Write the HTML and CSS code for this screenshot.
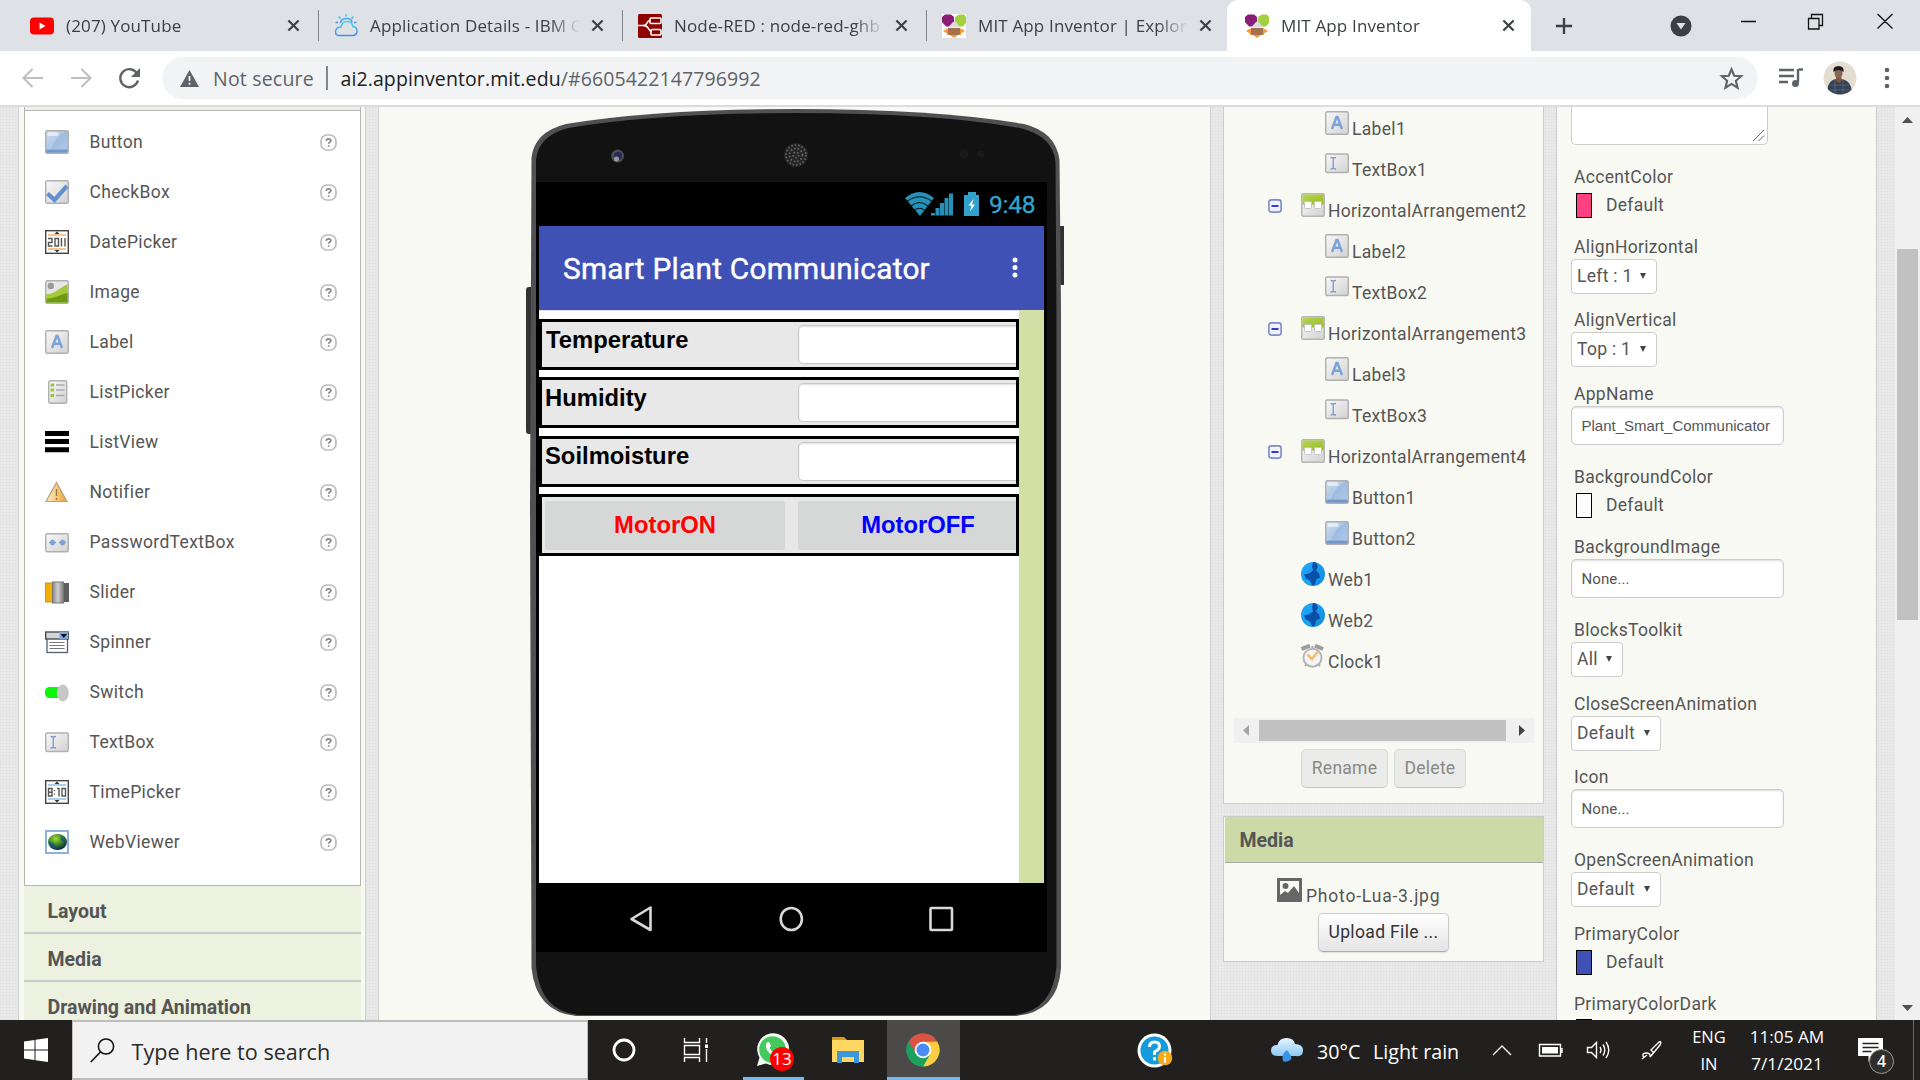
FILE: index.html
```html
<!DOCTYPE html>
<html lang="en">
<head>
<meta charset="utf-8">
<title>MIT App Inventor</title>
<link rel="stylesheet" href="styles.css">
</head>
<body>
<svg class="defs" width="0" height="0" aria-hidden="true">
  <defs>
    <linearGradient id="gBlue" x1="0" y1="0" x2="1" y2="1"><stop offset="0" stop-color="#c3d6ee"/><stop offset=".4" stop-color="#9dbbe0"/><stop offset="1" stop-color="#b0cbe8"/></linearGradient>
    <linearGradient id="gGray" x1="0" y1="0" x2="1" y2="1"><stop offset="0" stop-color="#f8f8f8"/><stop offset="1" stop-color="#d2d2d2"/></linearGradient>
    <linearGradient id="gGreen" x1="0" y1="0" x2="1" y2="1"><stop offset="0" stop-color="#b6d65a"/><stop offset="1" stop-color="#98bb20"/></linearGradient>
    <linearGradient id="gOrange" x1="0" y1="0" x2="1" y2="0"><stop offset="0" stop-color="#fff0cf"/><stop offset="1" stop-color="#f0a030"/></linearGradient>
    <linearGradient id="gMetal" x1="0" y1="0" x2="1" y2="0"><stop offset="0" stop-color="#8a8a8a"/><stop offset=".5" stop-color="#cfcfcf"/><stop offset="1" stop-color="#777"/></linearGradient>
    <radialGradient id="gGlobe" cx=".4" cy=".3" r=".7"><stop offset="0" stop-color="#a5d63c"/><stop offset=".5" stop-color="#3f8f22"/><stop offset="1" stop-color="#08264f"/></radialGradient>
    <linearGradient id="gCloud" x1="0" y1="0" x2="0" y2="1"><stop offset="0" stop-color="#e6f6ff"/><stop offset="1" stop-color="#8cc8f5"/></linearGradient>
    <linearGradient id="gIbm" x1="0" y1="0" x2="0" y2="1"><stop offset="0" stop-color="#4fd3e6"/><stop offset="1" stop-color="#4b8df0"/></linearGradient>
    <linearGradient id="gWeb" x1="0" y1="0" x2="1" y2="1"><stop offset="0" stop-color="#25aaff"/><stop offset="1" stop-color="#0f8ad8"/></linearGradient>
    <symbol id="i-button" viewBox="0 0 24 24"><rect x=".7" y=".7" width="22.6" height="22.6" rx="1.5" fill="url(#gBlue)" stroke="#b0b0b0" stroke-width="1.4"/><path d="M1.5 1.5H20Q10 8 5 20H1.500z" fill="#fff" opacity=".22"/><rect x="2.500" y="2" width="11" height="4" rx="1.500" fill="#fff" opacity=".55"/><rect x="1.400" y="19.600" width="21.200" height="3" fill="#7396cb"/></symbol>
    <symbol id="i-check" viewBox="0 0 24 24"><rect x=".7" y=".7" width="22.6" height="22.6" rx="1.5" fill="url(#gGray)" stroke="#b0b0b0" stroke-width="1.4"/><path d="M2.500 13.500l7 6.500L22 6" fill="none" stroke="#628fd0" stroke-width="4.200"/></symbol>
    <symbol id="i-date" viewBox="0 0 24 24"><rect x=".7" y=".7" width="22.6" height="22.6" fill="#fff" stroke="#444" stroke-width="1.4"/><path d="M3 5h18M3 19h18" stroke="#f3b469" stroke-width="1.300"/><path d="M9.500 4l2.500-2.500L14.500 4zM9.500 20l2.500 2.500 2.500-2.500z" fill="#333"/><path d="M3 8.500h4v4H3.500v3.500H7.500M10 8.500h3.500V16H10zM16.500 8v8.500M20 8v8.500" fill="none" stroke="#555" stroke-width="1.400"/></symbol>
    <symbol id="i-time" viewBox="0 0 24 24"><rect x=".7" y=".7" width="22.6" height="22.6" fill="#fff" stroke="#444" stroke-width="1.4"/><path d="M3 5h18M3 19h18" stroke="#8fc0e4" stroke-width="1.300"/><path d="M9.500 4l2.500-2.500L14.500 4zM9.500 20l2.500 2.500 2.500-2.500z" fill="#333"/><path d="M3.500 8.500h3.500V16H3.500zM3.500 12.200H7M9.500 10v1M9.500 13.500v1M12 8.500h2V16.500M17 8.500h3.500V16H17z" fill="none" stroke="#555" stroke-width="1.400"/></symbol>
    <symbol id="i-image" viewBox="0 0 24 24"><rect x=".7" y=".7" width="22.6" height="22.6" rx="1.5" fill="#e6e6e6" stroke="#b0b0b0" stroke-width="1.4"/><circle cx="5.800" cy="6" r="3.200" fill="#999"/><path d="M1.400 14C9 15 13 8 22.600 4.500V22.600H1.400z" fill="#a5c93a"/><path d="M1.400 18.500C9 19 16 14 22.600 13V22.600H1.400z" fill="#6d9c12"/></symbol>
    <symbol id="i-label" viewBox="0 0 24 24"><rect x=".7" y=".7" width="22.6" height="22.6" rx="1.5" fill="url(#gGray)" stroke="#b0b0b0" stroke-width="1.4"/><path d="M7 18L11.500 6h1L17 18M8.500 13.800h7" fill="none" stroke="#7ba3d8" stroke-width="2.400"/></symbol>
    <symbol id="i-listp" viewBox="0 0 24 24"><rect x="3.700" y=".7" width="18" height="22.600" rx="2" fill="url(#gGray)" stroke="#b0b0b0" stroke-width="1.400"/><path d="M5.500 5h3.500M5.500 10h3.500M5.500 15.500h3.500" stroke="#9ac53a" stroke-width="3"/><path d="M11 5h8.500M11 10h8.500M11 15.500h8.500" stroke="#aaa" stroke-width="1.500"/></symbol>
    <symbol id="i-listv" viewBox="0 0 24 24"><path d="M0 3.500h24M0 11.500h24M0 19.800h24" stroke="#000" stroke-width="5"/></symbol>
    <symbol id="i-notif" viewBox="0 0 24 24"><path d="M11.500 2.500L22 21.500H1z" fill="url(#gOrange)" stroke="#b5a37c" stroke-width="1.200"/><path d="M11.500 9v7M11.500 18v2" stroke="#8f7a4a" stroke-width="1.300"/></symbol>
    <symbol id="i-pass" viewBox="0 0 24 24"><rect x=".7" y="3.700" width="22.6" height="18" rx="1.5" fill="url(#gGray)" stroke="#b0b0b0" stroke-width="1.4"/><path d="M4 12.500h7M7.500 9.500v6M5.500 10.500l4 4M9.500 10.500l-4 4M14 12.500h7M17.500 9.500v6M15.500 10.500l4 4M19.500 10.500l-4 4" stroke="#7d9fd2" stroke-width="1.500"/></symbol>
    <symbol id="i-slider" viewBox="0 0 24 24"><rect y="3" width="8" height="19" fill="#f3ad05" stroke="#b98200" stroke-width=".8"/><rect x="17" y="3" width="7" height="19" fill="#5d5d5d"/><rect x="7.500" y="2" width="11" height="21" fill="url(#gMetal)" stroke="#777"/></symbol>
    <symbol id="i-spin" viewBox="0 0 24 24"><rect x="2" y="8" width="20.500" height="14.500" fill="#fff" stroke="#55606e" stroke-width="1.300"/><path d="M4.500 12.500h15M4.500 15.500h15M4.500 18.500h15" stroke="#777" stroke-width="1.200"/><rect x=".7" y="2" width="22.600" height="7" fill="#d2d6da" stroke="#3d434b" stroke-width="1.300"/><rect x="14.500" y="2" width="8.800" height="7" fill="#85a6dc"/><path d="M15.500 4h6.500l-3.200 4z" fill="#111"/></symbol>
    <symbol id="i-switch" viewBox="0 0 24 24"><rect y="7" width="20" height="11" rx="4.500" fill="#0cf50c"/><ellipse cx="17.800" cy="13" rx="6" ry="8.500" fill="#c9c6c6"/></symbol>
    <symbol id="i-text" viewBox="0 0 24 24"><rect x=".7" y="3" width="22.600" height="18.500" rx="1.500" fill="url(#gGray)" stroke="#b0b0b0" stroke-width="1.4"/><path d="M5.500 6.500q2.700 0 2.700 1v9.500q0 1-2.700 1M11 6.500q-2.800 0-2.800 1v9.500q0 1 2.800 1" fill="none" stroke="#7c98c8" stroke-width="1.300"/></symbol>
    <symbol id="i-webv" viewBox="0 0 24 24"><rect x="1" y="1" width="22" height="22" fill="#fff" stroke="#8fb2dd" stroke-width="2"/><ellipse cx="12.500" cy="12" rx="9.500" ry="8" fill="url(#gGlobe)"/><path d="M3.500 12q3 7 10 7.500q-4-3-4-5t-6-2.500M17 6q-3 3 0 5t4 2" fill="#174a9a" opacity=".7"/></symbol>
    <symbol id="i-harr" viewBox="0 0 24 24"><rect x=".7" y=".7" width="22.6" height="22.6" rx="1.5" fill="url(#gGray)" stroke="#b5b5b5" stroke-width="1.4"/><path d="M1.400 1.400h21.200V11.500H1.400z" fill="url(#gGreen)"/><rect x="3.500" y="8.500" width="7" height="7" rx="1" fill="#fff" stroke="#c4c4c4"/><rect x="13.500" y="8.500" width="7" height="7" rx="1" fill="#fff" stroke="#c4c4c4"/></symbol>
    <symbol id="i-web" viewBox="0 0 24 24"><circle cx="12" cy="12" r="12" fill="url(#gWeb)"/><path d="M12 0l3 .5 2 4-2 4 3 3 1 4-4 2-1 5-3 1-2-5-4-2-2-4 5-1 4-3-1-4z" fill="#0a4fa8"/><path d="M3.500 18q4-1.500 7.500 4.500q-5 .5-7.500-4.500" fill="#1ba9e0"/></symbol>
    <symbol id="i-clock" viewBox="0 0 24 24"><path d="M.5 5L9 1.700M14 1.700L22 5" stroke="#9d9d9d" stroke-width="4"/><path d="M4 22l3-3M19 22l-3-3M11.500 2v3" stroke="#aaa" stroke-width="2"/><circle cx="11.500" cy="13.700" r="9" fill="#f4f4f4" stroke="#b5b5b5" stroke-width="2"/><path d="M6.500 10.500l4.500 4.500L16.500 8" fill="none" stroke="#f4bd72" stroke-width="2.500"/></symbol>
    <symbol id="i-help" viewBox="0 0 17 17"><rect x="1" y="1" width="15" height="15" rx="6" fill="#fff" stroke="#bdbdbd" stroke-width="1.700"/><path d="M6.200 6.800q.2-1.900 2.400-1.900t2.300 1.700q0 1.200-1.400 1.700-.7.300-.7 1.400M8.700 11.200v1.600" fill="none" stroke="#888" stroke-width="1.700"/></symbol>
    <symbol id="i-minus" viewBox="0 0 14 14"><rect x=".9" y=".9" width="12.200" height="12.200" rx="2.500" fill="#f0f3ff" stroke="#7d8cc4" stroke-width="1.600"/><path d="M3.500 7h7" stroke="#2226c8" stroke-width="1.800"/></symbol>
    <symbol id="i-x" viewBox="0 0 14 14"><path d="M1.500 1.500l11 11M12.500 1.500l-11 11" stroke="#3c4043" stroke-width="2.300"/></symbol>
    <symbol id="i-mit" viewBox="0 0 24 24"><path d="M0 3l3-2.500h6L12 3v6l-3 3.500H4L0 8z" fill="#8b1c78"/><path d="M13 3l4-2.500h5L24 3v6l-3 3.500h-5l-3-4z" fill="#a4cf3e"/><path d="M11 8h3l4 5.500H6z" fill="#dcdcdc"/><path d="M1 17l4-2.500h14l4 2.500-4 2.500v1.500h-3l-4 3-4-3H5v-1.500z" fill="#f7993f"/><path d="M6 14h12v6l-2 1H8l-2-1z" fill="#a5714c"/></symbol>
  </defs>
</svg>

<header class="tabstrip">
  <div class="tab"><svg class="fav" viewBox="0 0 24 24"><rect y="3.500" width="24" height="17" rx="4" fill="#f00"/><path d="M9.500 8.500l6 3.500-6 3.500z" fill="#fff"/></svg><span class="tt">(207) YouTube</span><svg class="x"><use href="#i-x"/></svg></div>
  <div class="tab"><svg class="fav" viewBox="0 0 24 24"><g fill="none" stroke="url(#gIbm)" stroke-width="1.500"><path d="M7 21.500h12q4-.5 4-4.500t-4-4.500q-1-5-6-5t-6 5.500q-5 0-5.500 4.500t5.500 4z"/><path d="M6.500 9q0-4 5.500-4.500t6 4M12 0v2.500M4.500 2.500l2 2M19.500 2.500l-2 2M1.500 8.500h2.500M20 8.500h2.500"/></g></svg><span class="tt">Application Details - IBM C</span><svg class="x"><use href="#i-x"/></svg></div>
  <div class="tab"><svg class="fav" viewBox="0 0 24 24"><rect width="24" height="24" rx="1.500" fill="#8f0000"/><g fill="none" stroke="#fff" stroke-width="1.600"><rect x="12" y="4" width="11" height="5.500" rx="1"/><rect x="13" y="15.500" width="10" height="5.500" rx="1"/><path d="M0 11.500h5q3 0 4-2.500t3-2.500M5 11.500q4 0 5.500 3t3 3.500"/></g></svg><span class="tt">Node-RED : node-red-ghb</span><svg class="x"><use href="#i-x"/></svg></div>
  <div class="tab last"><svg class="fav mitbox"><use href="#i-mit"/></svg><span class="tt">MIT App Inventor | Explore</span><svg class="x"><use href="#i-x"/></svg></div>
  <div class="tab active"><svg class="fav"><use href="#i-mit"/></svg><span class="tt">MIT App Inventor</span><svg class="x"><use href="#i-x"/></svg></div>
  <svg class="plus" viewBox="0 0 20 20"><path d="M10 1v18M1 10h18" stroke="#3c4043" stroke-width="2.600"/></svg>
  <svg class="drop" viewBox="0 0 22 22"><circle cx="11" cy="11" r="10.500" fill="#3c4043"/><path d="M6.500 8h9L11 14.500z" fill="#dee1e6"/></svg>
  <svg class="wc" viewBox="0 0 160 20"><g fill="none" stroke="#111" stroke-width="1.300"><path d="M1 8.500h15M68.500 5.500h10.500v10.500H68.500zM71.500 5V1.500h11v11h-3M137.500 1l15 14.500M152.500 1l-15 14.500"/></g></svg>
</header>

<div class="toolbar">
  <svg class="nav" viewBox="0 0 150 30"><g fill="none" stroke="#bcbec1" stroke-width="2"><path d="M43 15H24M32.500 6L23.500 15l9 9M71 15H90M81.500 6l9 9-9 9"/></g><path d="M137 10.500a9 9 0 1 0 1 7" fill="none" stroke="#5f6368" stroke-width="2.400"/><path d="M140 5v9h-9z" fill="#5f6368"/></svg>
  <div class="omni">
    <svg class="warn" viewBox="0 0 19 17"><path d="M9.500 0L19 17H0z" fill="#5f6368"/><path d="M9.500 6v5M9.500 12.800v2" stroke="#f1f3f4" stroke-width="1.800"/></svg>
    <span class="ns">Not secure</span><i class="sep"></i><span class="url">ai2.appinventor.mit.edu<b>/#6605422147796992</b></span>
    <svg class="star" viewBox="0 0 24 24"><path d="M12 3l2.600 6.300 6.700.5-5.100 4.400 1.600 6.600L12 17.200l-5.800 3.600 1.600-6.600-5.100-4.400 6.700-.5z" fill="none" stroke="#5f6368" stroke-width="2"/></svg>
  </div>
  <svg class="music" viewBox="0 0 24 20"><path d="M0 2h15M0 8h15M0 14h9M19.500 1.500H24M19 1v13" stroke="#5f6368" stroke-width="2.400" fill="none"/><ellipse cx="16.500" cy="15.500" rx="3.500" ry="3.500" fill="#5f6368"/></svg>
  <svg class="avatar" viewBox="0 0 34 34"><defs><clipPath id="av"><circle cx="17" cy="17" r="16.500"/></clipPath></defs><g clip-path="url(#av)"><rect width="34" height="34" fill="#e5ddd0"/><path d="M4 34q0-15 9-16h5q11 1 11 16z" fill="#354154"/><path d="M8 24h18M7 29h20M12 19v15M20 19v15" stroke="#5b6a82" stroke-width=".8"/><path d="M13 15h5l1 5-3 2-3-2z" fill="#7b5542"/><ellipse cx="15.500" cy="12" rx="4" ry="5.500" fill="#8b6450"/><path d="M10.500 11q-1-6 5-6t5 6q-2-2-5-2t-5 2z" fill="#161b24"/></g></svg>
  <svg class="dots" viewBox="0 0 6 22"><g fill="#5f6368"><circle cx="3" cy="3" r="2.300"/><circle cx="3" cy="11" r="2.300"/><circle cx="3" cy="19" r="2.300"/></g></svg>
</div>

<main class="page">
  <section class="palette">
    <div class="plist">
      <div class="prow"><svg class="ic"><use href="#i-button"/></svg><span>Button</span><svg class="help"><use href="#i-help"/></svg></div>
      <div class="prow"><svg class="ic"><use href="#i-check"/></svg><span>CheckBox</span><svg class="help"><use href="#i-help"/></svg></div>
      <div class="prow"><svg class="ic"><use href="#i-date"/></svg><span>DatePicker</span><svg class="help"><use href="#i-help"/></svg></div>
      <div class="prow"><svg class="ic"><use href="#i-image"/></svg><span>Image</span><svg class="help"><use href="#i-help"/></svg></div>
      <div class="prow"><svg class="ic"><use href="#i-label"/></svg><span>Label</span><svg class="help"><use href="#i-help"/></svg></div>
      <div class="prow"><svg class="ic"><use href="#i-listp"/></svg><span>ListPicker</span><svg class="help"><use href="#i-help"/></svg></div>
      <div class="prow"><svg class="ic"><use href="#i-listv"/></svg><span>ListView</span><svg class="help"><use href="#i-help"/></svg></div>
      <div class="prow"><svg class="ic"><use href="#i-notif"/></svg><span>Notifier</span><svg class="help"><use href="#i-help"/></svg></div>
      <div class="prow"><svg class="ic"><use href="#i-pass"/></svg><span>PasswordTextBox</span><svg class="help"><use href="#i-help"/></svg></div>
      <div class="prow"><svg class="ic"><use href="#i-slider"/></svg><span>Slider</span><svg class="help"><use href="#i-help"/></svg></div>
      <div class="prow"><svg class="ic"><use href="#i-spin"/></svg><span>Spinner</span><svg class="help"><use href="#i-help"/></svg></div>
      <div class="prow"><svg class="ic"><use href="#i-switch"/></svg><span>Switch</span><svg class="help"><use href="#i-help"/></svg></div>
      <div class="prow"><svg class="ic"><use href="#i-text"/></svg><span>TextBox</span><svg class="help"><use href="#i-help"/></svg></div>
      <div class="prow"><svg class="ic"><use href="#i-time"/></svg><span>TimePicker</span><svg class="help"><use href="#i-help"/></svg></div>
      <div class="prow"><svg class="ic"><use href="#i-webv"/></svg><span>WebViewer</span><svg class="help"><use href="#i-help"/></svg></div>
    </div>
    <div class="phead">Layout</div>
    <div class="phead">Media</div>
    <div class="phead">Drawing and Animation</div>
  </section>

  <section class="viewer">
    <div class="phone">
      <svg class="shell" viewBox="0 0 538 909">
        <path d="M0 182q0-3 3-3h4v147H3q-3 0-3-3zM534 118h4v59h-4z" fill="#333"/>
        <path d="M5.500 50Q8 24 40 16Q130 1 270 1Q410 1 498 16Q530 24 533.500 52L535 200V860Q532 904 490 908H50Q10 904 5.500 860L4 400z" fill="#505052"/>
        <path d="M10 52Q12 28 42 20Q130 5 270 5Q410 5 494 20Q527 28 529.500 54L530.500 200V858Q527 903 488 907H52Q14 903 10 858z" fill="#121212"/>
        <circle cx="91.600" cy="48" r="6.500" fill="#4c4c50"/><circle cx="92" cy="48" r="4" fill="#2a2a5a"/><circle cx="90.500" cy="51" r="2.500" fill="#999"/>
        <circle cx="270" cy="47" r="12" fill="#252525"/><circle cx="270" cy="47" r="10" fill="none" stroke="#6a6a6a" stroke-width="1.600" stroke-dasharray="1.500 2"/><circle cx="270" cy="47" r="6.500" fill="none" stroke="#6a6a6a" stroke-width="1.600" stroke-dasharray="1.500 2"/><circle cx="270" cy="47" r="2.800" fill="none" stroke="#6a6a6a" stroke-width="1.600" stroke-dasharray="1.500 2"/>
        <circle cx="438" cy="46" r="4.500" fill="#1b191b"/><circle cx="455" cy="46" r="3.500" fill="#1b191b"/>
      </svg>
      <div class="screen">
        <div class="status">
          <svg viewBox="0 0 76 26" class="sicons"><path d="M0 7Q14.500-5 29 7L15 25z" fill="#2590b8"/><path d="M2 10.500Q14.500 1 27 10.500M6 15Q14.500 8 23 15M9.500 19Q14.500 15.500 19.500 19" fill="none" stroke="#04151c" stroke-width="1.100"/><path d="M28 24.500v-2.500M32.500 24.500V17M37 24.500V12M41.500 24.500V7M46 24.500V2.500" stroke="#2590b8" stroke-width="4"/><path d="M59 4h4V1h8v3h3v21H59z" fill="#33a0cc"/><path d="M68.500 8l-5 6.500h3l-1.500 6 5-7h-3z" fill="#fff"/></svg>
          <span>9:48</span>
        </div>
        <div class="appbar"><span>Smart Plant Communicator</span><svg viewBox="0 0 6 22"><g fill="#fff"><circle cx="3" cy="3" r="2.500"/><circle cx="3" cy="10.500" r="2.500"/><circle cx="3" cy="18" r="2.500"/></g></svg></div>
        <div class="canvas">
          <div class="form">
            <div class="ha"><span class="lab">Temperature</span><i class="tb"></i></div>
            <div class="ha"><span class="lab l2">Humidity</span><i class="tb"></i></div>
            <div class="ha"><span class="lab l2">Soilmoisture</span><i class="tb"></i></div>
            <div class="ha hb"><span class="btn on">MotorON</span><span class="btn off">MotorOFF</span></div>
          </div>
        </div>
        <svg class="navbar" viewBox="0 0 511 69"><g fill="none" stroke="#d8d8d8" stroke-width="2.600" stroke-linejoin="round"><path d="M114.500 24.500v22.500L95.500 36z"/><ellipse cx="255.300" cy="36" rx="10.600" ry="11"/><rect x="394.500" y="25" width="21.500" height="22" rx="1"/></g></svg>
      </div>
    </div>
  </section>

  <div class="mid">
    <section class="comps">
      <div class="tree">
        <div class="trow d2"><svg class="ic"><use href="#i-label"/></svg><span>Label1</span></div>
        <div class="trow d2 tx"><svg class="ic"><use href="#i-text"/></svg><span>TextBox1</span></div>
        <div class="trow d1"><svg class="mi"><use href="#i-minus"/></svg><svg class="ic"><use href="#i-harr"/></svg><span>HorizontalArrangement2</span></div>
        <div class="trow d2"><svg class="ic"><use href="#i-label"/></svg><span>Label2</span></div>
        <div class="trow d2 tx"><svg class="ic"><use href="#i-text"/></svg><span>TextBox2</span></div>
        <div class="trow d1"><svg class="mi"><use href="#i-minus"/></svg><svg class="ic"><use href="#i-harr"/></svg><span>HorizontalArrangement3</span></div>
        <div class="trow d2"><svg class="ic"><use href="#i-label"/></svg><span>Label3</span></div>
        <div class="trow d2 tx"><svg class="ic"><use href="#i-text"/></svg><span>TextBox3</span></div>
        <div class="trow d1"><svg class="mi"><use href="#i-minus"/></svg><svg class="ic"><use href="#i-harr"/></svg><span>HorizontalArrangement4</span></div>
        <div class="trow d2"><svg class="ic"><use href="#i-button"/></svg><span>Button1</span></div>
        <div class="trow d2"><svg class="ic"><use href="#i-button"/></svg><span>Button2</span></div>
        <div class="trow d0"><svg class="ic"><use href="#i-web"/></svg><span>Web1</span></div>
        <div class="trow d0"><svg class="ic"><use href="#i-web"/></svg><span>Web2</span></div>
        <div class="trow d0"><svg class="ic"><use href="#i-clock"/></svg><span>Clock1</span></div>
      </div>
      <div class="hscroll"><svg viewBox="0 0 25 25"><path d="M15 7v11l-6-5.500z" fill="#a3a3a3"/></svg><i></i><svg viewBox="0 0 25 25"><path d="M10 7v11l6-5.500z" fill="#444"/></svg></div>
      <div class="cbtns"><button class="gbtn dis">Rename</button><button class="gbtn dis">Delete</button></div>
    </section>
    <section class="media">
      <div class="mhead">Media</div>
      <div class="mfile"><svg viewBox="0 0 25 24"><rect width="25" height="24" rx="1" fill="#666"/><rect x="3" y="3" width="19" height="15" fill="#f8f9f3"/><circle cx="8.500" cy="8" r="3" fill="#666"/><path d="M3 20v-3l5-4 3 2 6-7 5 7v5z" fill="#666"/></svg><span>Photo-Lua-3.jpg</span></div>
      <button class="gbtn up">Upload File ...</button>
    </section>
  </div>

  <section class="props">
    <div class="area"><svg viewBox="0 0 14 14"><path d="M1 13L13 1M7 13l6-6" stroke="#555" stroke-width="1"/></svg></div>
    <div class="p pc"><label>AccentColor</label><div class="sw"><i class="pink"></i>Default</div></div>
    <div class="p ps"><label>AlignHorizontal</label><div class="sel w86">Left : 1<s></s></div></div>
    <div class="p ps"><label>AlignVertical</label><div class="sel w86">Top : 1<s></s></div></div>
    <div class="p pi"><label>AppName</label><div class="inp ar">Plant_Smart_Communicator</div></div>
    <div class="p pc"><label>BackgroundColor</label><div class="sw"><i class="white"></i>Default</div></div>
    <div class="p pi"><label>BackgroundImage</label><div class="inp">None...</div></div>
    <div class="p ps"><label>BlocksToolkit</label><div class="sel w52">All<s></s></div></div>
    <div class="p ps"><label>CloseScreenAnimation</label><div class="sel w90">Default<s></s></div></div>
    <div class="p pi"><label>Icon</label><div class="inp">None...</div></div>
    <div class="p ps"><label>OpenScreenAnimation</label><div class="sel w90">Default<s></s></div></div>
    <div class="p pc"><label>PrimaryColor</label><div class="sw"><i class="indigo"></i>Default</div></div>
    <div class="p pc"><label>PrimaryColorDark</label><div class="sw last-sw"><i class="indigo"></i></div></div>
  </section>
  <div class="vscroll"><svg viewBox="0 0 25 25"><path d="M7 16h11l-5.500-6z" fill="#505050"/></svg><i></i><svg viewBox="0 0 25 25"><path d="M7 10h11l-5.500 6z" fill="#505050"/></svg></div>
</main>

<footer class="taskbar">
  <svg class="start" viewBox="0 0 24 24"><path d="M0 3.500L10.500 2v9.500H0zM11.500 1.800L24 0v11.500H11.500zM0 12.500h10.500V22L0 20.500zM11.500 12.500H24V24l-12.500-1.800z" fill="#fff"/></svg>
  <div class="search"><svg viewBox="0 0 25 25"><circle cx="16" cy="8.500" r="7.600" fill="none" stroke="#111" stroke-width="1.500"/><path d="M10.500 14L.8 24" stroke="#111" stroke-width="1.700"/></svg><span>Type here to search</span></div>
  <div class="cell c1"><svg width="26" height="26" viewBox="0 0 26 26"><circle cx="13" cy="13" r="10" fill="none" stroke="#fff" stroke-width="2.800"/></svg></div>
  <div class="cell c2"><svg width="26" height="26" viewBox="0 0 26 26"><path d="M1.500 1v4.500h15V1M1.500 25v-4.500h15V25M1.500 8.500h15v9h-15zM23.500 1v5M23.500 12v13" fill="none" stroke="#fff" stroke-width="1.400"/><rect x="22" y="7.500" width="3" height="3.500" fill="#fff"/></svg></div>
  <div class="cell c3 run"><svg width="36" height="36" viewBox="0 0 36 36"><path d="M2 34l2.500-8.500A16 16 0 1 1 11 31.500z" fill="#f3fbf3"/><circle cx="17.500" cy="17.500" r="13.300" fill="#45c95c"/><path d="M12 10.500q2-1.500 3 1l1 2.500-1.500 2q2 4 6 5.500l2-2 3.500 2q-.5 4-4.500 3.500Q12 22 11 15q-.5-3 1-4.500z" fill="#fff"/></svg><em>13</em></div>
  <div class="cell c4"><svg width="32" height="28" viewBox="0 0 32 28"><path d="M0 1h12l3 3v5H0z" fill="#d99a17"/><rect y="4" width="32" height="22" fill="#ffd661"/><path d="M5 15h22v12h-5v-6H10v6H5z" fill="#3b97dc"/></svg></div>
  <div class="cell c5 run"><svg width="34" height="34" viewBox="0 0 34 34"><circle cx="17" cy="17" r="16.500" fill="#1da15e"/><path d="M17 17L2.700 8.700A16.500 16.500 0 0 1 31.300 8.700z" fill="#de5246"/><path d="M17 8.700H31.300A16.500 16.500 0 0 1 17 33.500L24 21z" fill="#ffcd42"/><path d="M2.700 8.700L10 21l7-4V6z" fill="#de5246"/><path d="M2.700 8.700A16.500 16.500 0 0 0 17 33.500L24 21H10z" fill="#1da15e"/><circle cx="17" cy="17" r="8.300" fill="#fff"/><circle cx="17" cy="17" r="6.500" fill="#4a8af4"/></svg></div>
  <svg class="qm" viewBox="0 0 36 36"><circle cx="17.500" cy="17.500" r="17" fill="#fff"/><circle cx="17.500" cy="17.500" r="14" fill="#149bdb"/><path d="M12.500 14q0-5 5-5t5 4.500q0 3-5 5.500v3M17.500 24v3.500" fill="none" stroke="#fff" stroke-width="3"/><circle cx="28" cy="25" r="7.300" fill="#f7ab1b"/><path d="M28 20.500v2M28 24v6" stroke="#fff" stroke-width="2"/></svg>
  <svg class="cloud" viewBox="0 0 32 24"><path d="M7 18Q0 18 0 12.500T6.500 7Q8 0 15.500 0T24 6q8 0 8 6.500T25 18z" fill="url(#gCloud)"/><path d="M16 12q4.500 6 4.500 8t-4.500 3.500T11.500 20t4.500-8z" fill="#3b93e8"/></svg>
  <span class="wx w1">30°C</span><span class="wx w2">Light rain</span>
  <svg class="tray" viewBox="0 0 180 30"><g fill="none" stroke="#fff" stroke-width="1.400"><path d="M4 20l9-9 9 9M50.500 9.500h21v11.500H50.500zM73 13v5M98.500 12.500h4l5-5v15l-5-5h-4zM111 12q2 3 0 6M114 9.500q3.500 5.500 0 11M117 7q5.500 8 0 16"/><path d="M155 23q-3-5 2-5t4 4l10-12q2-4-1-3l-8 8 3 3M153 24l5-4"/></g><rect x="53" y="12" width="16" height="6.500" fill="#fff"/></svg>
  <div class="lang"><span>ENG</span><span>IN</span></div>
  <div class="time"><span>11:05 AM</span><span>7/1/2021</span></div>
  <div class="act"><svg viewBox="0 0 25 24"><path d="M0 0h25v18H15l-4.500 6v-6H0z" fill="#fff"/><path d="M4.500 5.500h16M4.500 9.500h16M4.500 13.500h9" stroke="#222" stroke-width="1.400"/></svg><em>4</em></div>
  <i class="peek"></i>
</footer>
</body>
</html>
```
FILE: styles.css
```css
* { box-sizing: border-box; }
html, body { margin: 0; width: 1920px; height: 1080px; overflow: hidden; }
body { font-family: Roboto, "Liberation Sans", sans-serif; font-size: 17.5px; line-height: 22px; color: #555; background: #fff; }
svg { display: block; flex: none; }
.defs { position: absolute; }

/* browser tabs */
.tabstrip { display: flex; align-items: center; height: 51px; padding-left: 15px; background: #dee1e6; font-family: "Open Sans", "Noto Sans", sans-serif; }
.tab { display: flex; align-items: center; width: 304px; height: 31px; padding-left: 15px; border-right: 1.500px solid #85888c; }
.tab.last { width: 300px; border: 0; }
.tab.active { height: 51px; width: 304px; padding-left: 18px; border: 0; border-radius: 11px 11px 0 0; background: #fff; }
.fav { width: 24px; height: 24px; }
.mitbox { background: #fff; }
.tt { flex: none; width: 212px; margin-left: 12px; white-space: nowrap; font-size: 17px; letter-spacing: .15px; color: #3c4043; -webkit-mask-image: linear-gradient(90deg, #000 180px, transparent 210px); mask-image: linear-gradient(90deg, #000 180px, transparent 210px); }
.x { width: 13px; height: 13px; margin-left: 9px; }
.plus { width: 18px; height: 18px; margin-left: 24px; }
.drop { width: 22px; height: 22px; margin-left: 97px; }
.wc { width: 160px; height: 20px; margin: -6px 0 0 48px; }

/* address bar */
.toolbar { display: flex; align-items: center; height: 56px; border-bottom: 2px solid #dadce0; background: #fff; font-family: "Open Sans", "Noto Sans", sans-serif; font-size: 19.500px; }
.nav { width: 150px; height: 30px; }
.omni { display: flex; align-items: center; width: 1596px; height: 42px; margin-left: 12px; padding-left: 18px; border-radius: 21px; background: #f1f3f4; color: #5f6368; }
.warn { width: 19px; height: 17px; }
.ns { width: 113px; margin-left: 14px; padding-top: 1px; white-space: nowrap; letter-spacing: .2px; }
.sep { width: 1.500px; height: 24px; background: #85888c; }
.url { margin-left: 13px; padding-top: 1px; color: #202124; white-space: nowrap; letter-spacing: .1px; }
.url b { font-weight: 400; color: #5f6368; }
.star { width: 25px; height: 25px; margin: 0 14px 0 auto; }
.music { width: 24px; height: 20px; margin-left: 21px; }
.avatar { width: 34px; height: 34px; margin-left: 20px; }
.dots { width: 6px; height: 22px; margin-left: 27px; }

/* designer */
.page { display: flex; align-items: flex-start; height: 913px; overflow: hidden; background-color: #eaeaea; background-image: repeating-linear-gradient(0deg, rgba(0,0,0,.018) 0 1px, transparent 1px 3px), repeating-linear-gradient(90deg, rgba(0,0,0,.018) 0 1px, transparent 1px 3px); }
.palette { width: 348px; height: 913px; margin-left: 18px; padding: 0 4px 0 5px; overflow: hidden; border: solid #d0d0d0; border-width: 0 1px; background: #f8f9f3; }
.plist { height: 779px; padding-top: 10px; border: 1px solid #b5b5b5; border-top: 0; background: #fff; box-shadow: inset 0 3px 0 #eef1e0, inset 0 4px 0 #b5b5b5; }
.prow { display: flex; align-items: center; height: 50px; padding-left: 20px; }
.ic { width: 24px; height: 24px; }
.prow span { width: 230px; margin-left: 20.500px; padding-right: .5px; letter-spacing: .35px; }
.help { width: 17px; height: 17px; }
.phead { height: 48px; padding: 15px 0 0 23.500px; border-bottom: 2px solid #ccc; background: #edf1df; font-size: 19.500px; font-weight: 700; }

.viewer { width: 833px; height: 913px; margin-left: 12px; overflow: hidden; border: solid #d0d0d0; border-width: 0 1px; background: #f8f9f3; }
.phone { position: relative; width: 538px; height: 909px; margin: 1px 0 0 147px; padding: 74px 0 0 10px; }
.shell { position: absolute; inset: 0; width: 538px; height: 909px; }
.screen { position: relative; width: 511px; height: 770px; background: #000; }
.status { display: flex; align-items: center; height: 44px; padding-left: 369px; color: #33a5cc; font-size: 24.500px; }
.sicons { width: 76px; height: 26px; }
.status span { margin-left: 8px; padding-top: 1px; letter-spacing: -.2px; -webkit-text-stroke: .3px #33a5cc; }
.appbar { display: flex; align-items: center; width: 505px; height: 84px; margin-left: 3px; padding-left: 24px; background: #4051b5; color: #fff; }
.appbar span { width: 449px; padding-top: 1px; font-size: 29.800px; letter-spacing: .25px; -webkit-text-stroke: .4px #fff; }
.appbar svg { width: 6px; height: 22px; }
.canvas { width: 505px; height: 573px; margin-left: 3px; padding-right: 25px; background: #d2dfa5; }
.form { display: flex; flex-direction: column; gap: 7.400px; height: 573px; padding-top: 8px; border-top: 1px solid #ddd; background: #fff; font-family: "Liberation Sans", Arial, sans-serif; font-weight: 700; font-size: 23.800px; line-height: 27px; color: #000; }
.ha { flex: none; display: flex; height: 51px; overflow: hidden; border: 3px solid #000; background: #e8e8e8; }
.lab { flex: none; width: 252px; padding: 3.700px 0 0 4px; }
.lab.l2 { padding-left: 3px; }
.tb { flex: none; width: 240px; height: 39px; margin: 3px 0 0 4px; border: 1px solid #c8c8c8; border-radius: 5px; background: #fff; box-shadow: inset 0 1px 2px #ddd; }
.hb { height: 62px; padding: 4px 0 0 3px; }
.btn { flex: none; width: 240px; height: 49px; margin-right: 13px; border-radius: 2px; background: #d6d8d7; text-align: center; line-height: 48px; }
.on { color: #f00; }
.off { color: #00f; }
.navbar { width: 511px; height: 69px; }

.mid { width: 321px; margin-left: 12px; }
.comps { height: 697px; border: 1px solid #ccc; border-top: 0; background: #f8f9f3; }
.tree { height: 611px; }
.trow { display: flex; height: 41px; padding-top: 4px; }
.trow span { margin: 7px 0 0 3px; letter-spacing: .32px; white-space: nowrap; }
.d2 { padding-left: 101px; }
.d1 { padding-left: 44px; }
.d0 { padding-left: 77px; }
.mi { width: 14px; height: 14px; margin: 6px 19px 0 0; }
.tx .ic { margin-top: -1px; }
.hscroll { display: flex; align-items: center; width: 300px; height: 25px; margin-left: 10px; background: #f0f0f0; }
.hscroll svg { width: 25px; height: 25px; }
.hscroll i { width: 247px; height: 21px; margin-right: 3px; background: #c1c1c1; }
.cbtns { display: flex; gap: 6px; margin: 6px 0 0 77px; }
.gbtn { height: 39px; padding: 0 0 2px; border: 1px solid #ccc; border-bottom-color: #aaa; border-radius: 5px; background: linear-gradient(#fff, #e4e4e4); font: 17.500px Roboto, sans-serif; color: #333; box-shadow: 0 1px 2px rgba(0,0,0,.1); letter-spacing: .35px; }
.gbtn.dis { width: 87px; border-color: #d8d8d8 #d8d8d8 #c4c4c4; background: #ebebe9; color: #888; box-shadow: none; letter-spacing: .25px; }
.gbtn.dis + .dis { width: 72px; }
.media { height: 146px; margin-top: 12px; border: 1px solid #ccc; background: #f8f9f3; }
.mhead { height: 46px; margin-left: 1px; padding: 13px 0 0 14.500px; border-bottom: 1px solid #aaa; background: #cbdaa6; font-size: 19.500px; font-weight: 700; }
.mfile { display: flex; padding: 15px 0 0 53px; }
.mfile svg { width: 25px; height: 24px; }
.mfile span { margin: 7px 0 0 4px; letter-spacing: .8px; }
.gbtn.up { display: block; width: 131px; margin: 6px 0 0 94px; }

.props { width: 321px; height: 913px; margin-left: 12px; padding-left: 14px; overflow: hidden; border: solid #ccc; border-width: 0 1px; background: #f8f9f3; letter-spacing: .3px; }
.area { display: flex; justify-content: flex-end; align-items: flex-end; width: 197px; height: 38px; margin-bottom: 21px; padding: 2px; border: 1px solid #ccc; border-top: 0; border-radius: 0 0 5px 5px; background: #fff; }
.area svg { width: 13px; height: 13px; }
.p label { display: block; height: 23px; padding-left: 3px; }
.pc { height: 70px; }
.ps { height: 73.400px; }
.pi { height: 83.200px; }
.sw { display: flex; padding: 4px 0 0 5px; line-height: 25px; }
.last-sw { padding-top: 3px; }
.sw i { width: 16px; height: 25px; margin-right: 14px; border: 1px solid #000; }
.pink { background: #ff4081; }
.white { background: #fff; }
.indigo { background: #3f51b5; }
.sel { display: flex; align-items: center; height: 35px; padding: 0 10px 1px 5px; justify-content: space-between; border: 1px solid #ccc; border-radius: 4px; background: #fff; }
.sel s { border: solid transparent; border-width: 6px 3.500px 0; border-top-color: #444; }
.w86 { width: 86px; } .w52 { width: 52px; } .w90 { width: 90px; }
.inp { width: 213px; height: 39px; padding-left: 9.500px; border: 1px solid #ccc; border-radius: 5px; background: #fff; box-shadow: inset 0 1px 2px #ddd; font-size: 15px; line-height: 38px; letter-spacing: .1px; }
.ar { font-family: "Liberation Sans", Arial, sans-serif; letter-spacing: 0; }
.vscroll { display: flex; flex-direction: column; align-items: center; width: 25px; height: 913px; margin-left: 18px; background: #f0f0f0; }
.vscroll svg { width: 25px; height: 25px; }
.vscroll i { width: 21px; height: 371px; margin: 117px 0 auto; background: #c1c1c1; }

/* taskbar */
.taskbar { display: flex; align-items: center; height: 60px; background: #21201e; color: #fff; font-family: "Open Sans", "Noto Sans", sans-serif; }
.start { width: 24px; height: 24px; margin: 0 24px 0 24px; }
.search { display: flex; align-items: center; width: 516px; height: 60px; padding-left: 17px; border: solid #bdbdbd; border-width: 2px 1px; background: #f2f2f2; color: #2b2b2b; font-size: 21.600px; }
.search svg { width: 25px; height: 25px; }
.search span { margin: 3px 0 0 16.500px; }
.cell { position: relative; display: flex; align-items: center; justify-content: center; height: 60px; }
.c1 { width: 72px; }
.c2 { width: 72px; }
.c3 { width: 61px; margin-left: 11px; padding-right: 2px; }
.c4 { width: 88px; }
.c5 { width: 73px; margin-left: -5px; padding-right: 1px; background: #4b4a48; }
.run { border-bottom: 3px solid #76b9ed; padding-top: 3px; }
.cell em { position: absolute; left: 27px; top: 27px; width: 24px; height: 24px; border-radius: 50%; background: #f00; font: 17px/24px "Open Sans", sans-serif; text-align: center; }
.qm { width: 36px; height: 36px; margin: 2px 0 0 177px; }
.cloud { width: 32px; height: 24px; margin: -1px 0 0 98px; }
.wx { padding-top: 3px; font-size: 19.700px; white-space: nowrap; }
.w1 { width: 44px; margin-left: 14px; }
.w2 { width: 86px; margin-left: 12px; }
.tray { width: 180px; height: 30px; margin: 0 0 0 30px; }
.lang, .time { display: flex; flex-direction: column; align-items: center; gap: 5px; padding-top: 1px; font-size: 16.500px; white-space: nowrap; }
.lang { width: 40px; margin-left: 20px; }
.time { width: 80px; margin-left: 18px; font-size: 17.200px; }
.act { position: relative; margin-left: 31px; }
.act svg { width: 25px; height: 24px; }
.act em { position: absolute; left: 11px; top: 11px; width: 25px; height: 25px; border: 1px solid #999; border-radius: 50%; background: #2e2e2d; font: 600 16px/22px "Open Sans", sans-serif; text-align: center; }
.peek { width: 1px; height: 60px; margin: 0 6px 0 auto; background: #6a6a68; }
```
